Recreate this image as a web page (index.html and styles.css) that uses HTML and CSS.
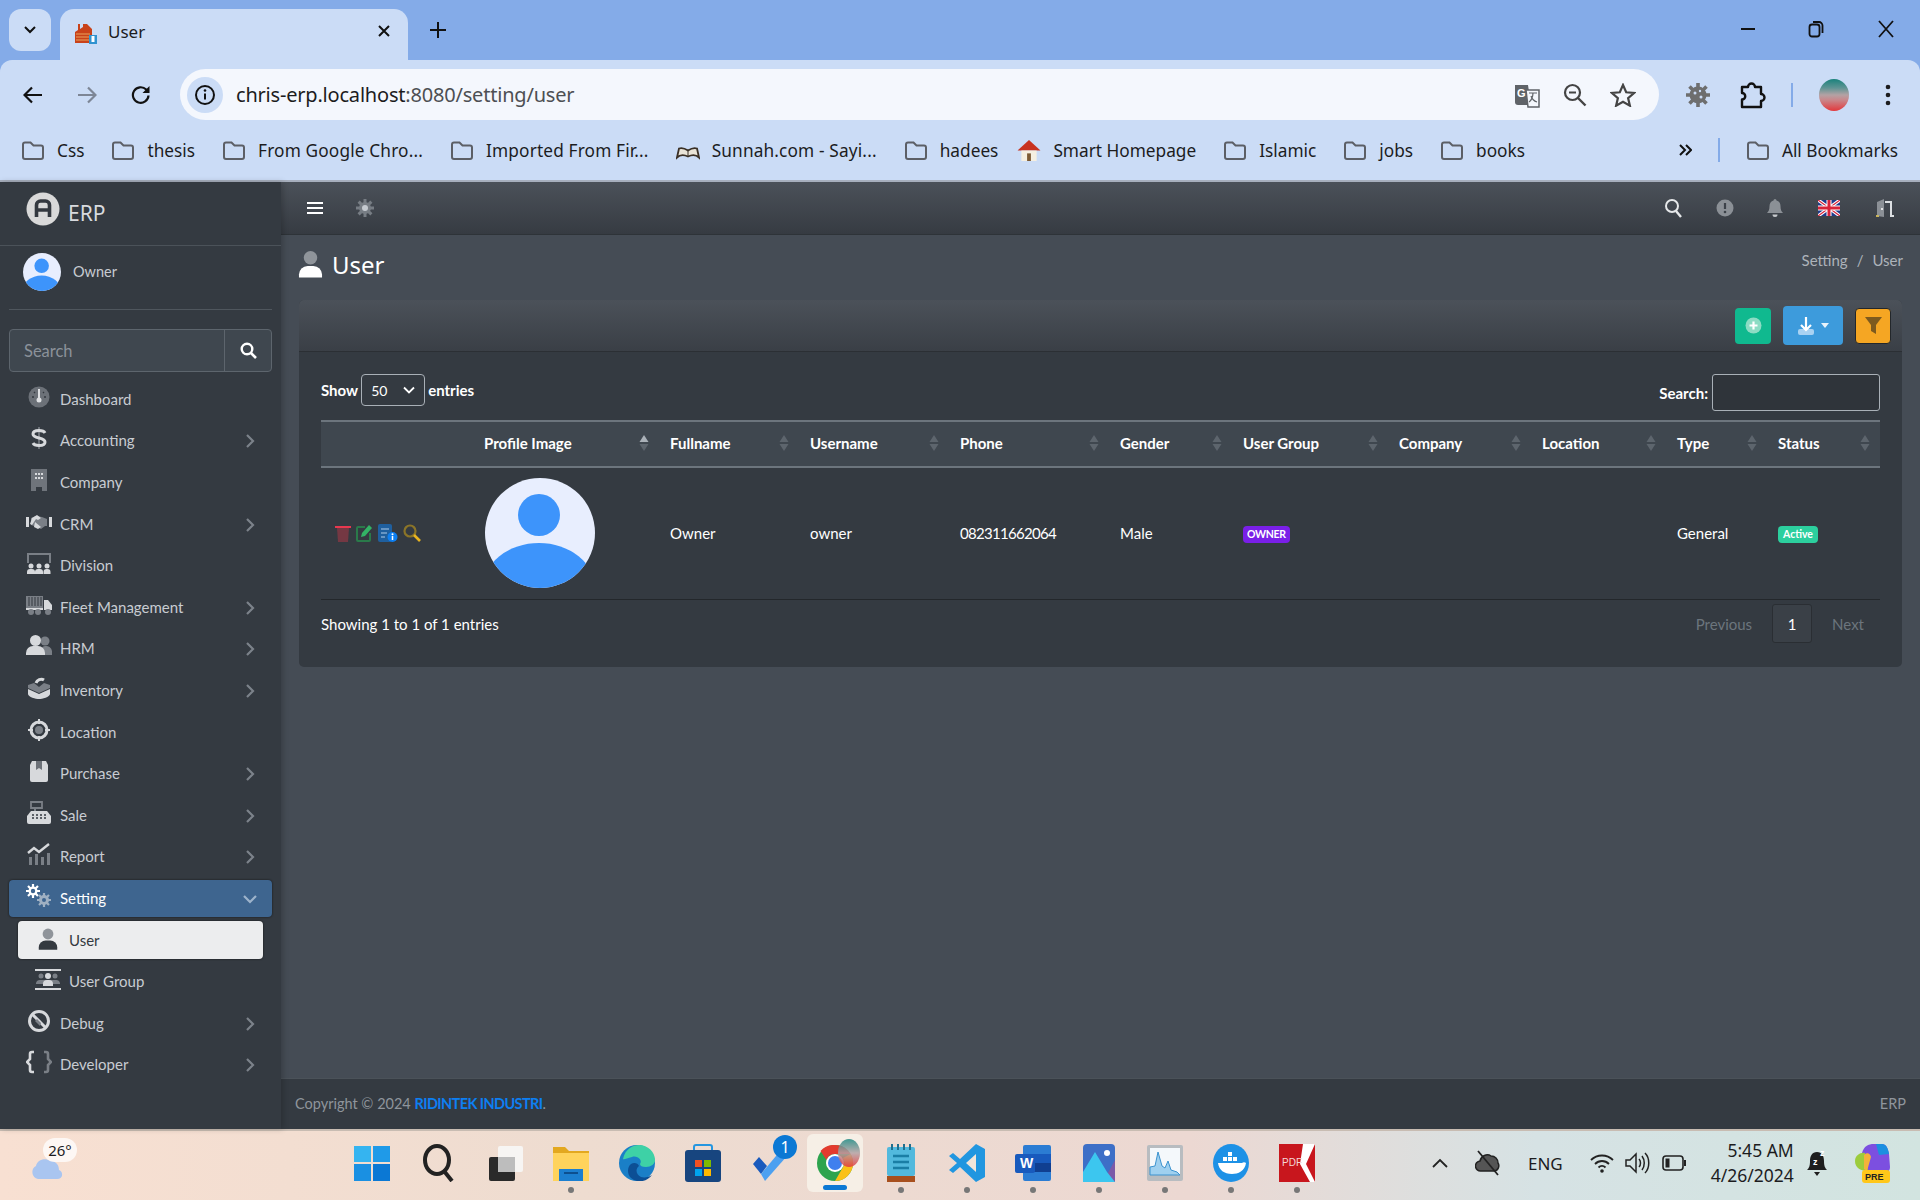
FILE: index.html
```html
<!DOCTYPE html>
<html lang="en">
<head>
    <meta charset="UTF-8">
    <meta name="viewport" content="width=device-width, initial-scale=1.0">
    <title>User</title>
    <link rel="stylesheet" href="styles.css">
</head>
<body>

    <!-- Shared icons -->
    <svg class="sprite" aria-hidden="true">
        <symbol id="folder" viewBox="0 0 24 20"><path d="M2 4a2 2 0 0 1 2-2h5.500l3 3H20a2 2 0 0 1 2 2v9.500a2 2 0 0 1-2 2H4a2 2 0 0 1-2-2z" fill="none" stroke="#5c5f66" stroke-width="2"/></symbol>
        <symbol id="chev" viewBox="0 0 10 16"><path d="M2 2l6 6-6 6" fill="none" stroke="#7c828a" stroke-width="2.200"/></symbol>
        <symbol id="sort" viewBox="0 0 10 18"><path d="M5 1l4.500 7H.5z" fill="#5d656d"/><path d="M5 17l4.500-7H.5z" fill="#5d656d"/></symbol>
        <symbol id="sortup" viewBox="0 0 10 18"><path d="M5 1l4.500 7H.5z" fill="#aab1b8"/><path d="M5 17l4.500-7H.5z" fill="#5d656d"/></symbol>
        <symbol id="avatar" viewBox="0 0 110 110"><clipPath id="avclip"><circle cx="55" cy="55" r="55"/></clipPath><circle cx="55" cy="55" r="55" fill="#e8eefe"/><circle cx="54" cy="37" r="21" fill="#3d94fb"/><ellipse cx="54" cy="110" rx="56" ry="45" fill="#3d94fb" clip-path="url(#avclip)"/></symbol>
        <symbol id="person" viewBox="0 0 26 28"><circle cx="13" cy="7.500" r="7" fill="#8f949a"/><path d="M1 28v-3a9 9 0 0 1 9-9h6a9 9 0 0 1 9 9v3z" fill="currentColor"/></symbol>
    </svg>

    <!-- Browser chrome -->
    <header class="browser">
        <div class="tabstrip">
            <div class="tab-list-btn"><svg width="14" height="10" viewBox="0 0 14 10"><path d="M2 2l5 5 5-5" fill="none" stroke="#111" stroke-width="2"/></svg></div>
            <div class="tab">
                <svg class="favicon" width="23" height="22" viewBox="0 0 23 22"><path d="M1 21V10l3-2V2h2v5l3-2V2l4 0 5 5v14z" fill="#c9421a"/><path d="M2 12h14M2 15h14M2 18h14" stroke="#e8a35c" stroke-width="1"/><rect x="15" y="13" width="8" height="9" fill="#3193d0"/><rect x="17.500" y="14" width="3" height="6" fill="#fff"/></svg>
                <span class="tab-title">User</span>
                <svg class="tab-close" width="14" height="14" viewBox="0 0 14 14"><path d="M2 2l10 10M12 2L2 12" stroke="#111" stroke-width="2"/></svg>
            </div>
            <svg class="new-tab" width="16" height="16" viewBox="0 0 16 16"><path d="M8 0v16M0 8h16" stroke="#111" stroke-width="2"/></svg>
            <div class="win-btns">
                <svg width="16" height="16" viewBox="0 0 16 16"><path d="M1 8h14" stroke="#111" stroke-width="2"/></svg>
                <svg width="16" height="18" viewBox="0 0 16 18"><rect x="1.500" y="4.500" width="10" height="12" rx="2.500" fill="none" stroke="#111" stroke-width="1.800"/><path d="M5 2h6a3.500 3.500 0 0 1 3.500 3.500V13" fill="none" stroke="#111" stroke-width="1.800"/></svg>
                <svg class="win-close" width="16" height="18" viewBox="0 0 16 18"><path d="M1 1l14 16M15 1L1 17" stroke="#111" stroke-width="1.800"/></svg>
            </div>
        </div>
        <div class="toolbar">
            <div class="nav-btns">
                <svg width="20" height="18" viewBox="0 0 20 18"><path d="M19 9H2M9 1.500L1.500 9 9 16.500" fill="none" stroke="#111" stroke-width="2.200"/></svg>
                <svg width="20" height="18" viewBox="0 0 20 18"><path d="M1 9h17M11 1.500L18.500 9 11 16.500" fill="none" stroke="#7d8696" stroke-width="2.200"/></svg>
                <svg width="20" height="20" viewBox="0 0 20 20"><path d="M17.500 10.500a7.800 7.800 0 1 1-2.300-6l2.300 2.300" fill="none" stroke="#111" stroke-width="2.200"/><path d="M18.500 1v7h-7z" fill="#111"/></svg>
            </div>
            <div class="omnibox">
                <div class="site-info"><svg width="22" height="22" viewBox="0 0 22 22"><circle cx="11" cy="11" r="9" fill="none" stroke="#111" stroke-width="2"/><path d="M11 9.500v6" stroke="#111" stroke-width="2"/><circle cx="11" cy="6.500" r="1.300" fill="#111"/></svg></div>
                <div class="url"><span class="url-host">chris-erp.localhost</span>:8080/setting/user</div>
                <div class="omni-actions">
                    <svg width="26" height="26" viewBox="0 0 26 26"><path d="M1 3h13l3 20H4a3 3 0 0 1-3-3z" fill="#5f6368"/><path d="M12 8h13v17H14z" fill="#f4f7fd" stroke="#5f6368" stroke-width="1.500"/><text class="gt" x="3" y="15">G</text><path d="M15 11h8M19 11c0 4-2 8-4 9M17 14c1 3 3 5 6 6" fill="none" stroke="#5f6368" stroke-width="1.200"/></svg>
                    <svg width="24" height="24" viewBox="0 0 24 24"><circle cx="9.500" cy="9.500" r="7.500" fill="none" stroke="#444" stroke-width="2.200"/><path d="M15 15l7.500 7.500" stroke="#444" stroke-width="2.400"/><path d="M6 9.500h7" stroke="#444" stroke-width="2"/></svg>
                    <svg width="26" height="24" viewBox="0 0 26 24"><path d="M13 2l3.200 7.300 7.800.7-5.900 5.100 1.800 7.600L13 18.700 6.100 22.700l1.800-7.600L2 10l7.800-.7z" fill="none" stroke="#444" stroke-width="2.200"/></svg>
                </div>
            </div>
            <div class="ext-btns">
                <svg class="ext-gear" width="26" height="26" viewBox="0 0 26 26"><circle cx="13" cy="13" r="8.500" fill="#6e6e6e"/><g stroke="#6e6e6e" stroke-width="3.600"><path d="M13 1v24M1 13h24M4.500 4.500l17 17M21.500 4.500l-17 17"/></g><circle cx="10" cy="11" r="1.500" fill="#cbdcf6"/><circle cx="16" cy="15" r="1.500" fill="#cbdcf6"/><circle cx="15" cy="9" r="1.200" fill="#cbdcf6"/></svg>
                <svg class="ext-puzzle" width="28" height="28" viewBox="0 0 28 28"><path d="M4 6h6a3.500 3.500 0 0 1 7 0h6v7a3.500 3.500 0 0 1 0 7v6H4v-7.500a3.200 3.200 0 0 0 0-6.500z" fill="none" stroke="#111" stroke-width="2.400" stroke-linejoin="round"/></svg>
                <span class="sep"></span>
                <span class="profile-pic"></span>
                <svg class="dots" width="6" height="22" viewBox="0 0 6 22"><circle cx="3" cy="3" r="2.300"/><circle cx="3" cy="11" r="2.300"/><circle cx="3" cy="19" r="2.300"/></svg>
            </div>
        </div>
        <div class="bookmarks">
            <a class="bm"><svg class="bm-ic"><use href="#folder"/></svg>Css</a>
            <a class="bm"><svg class="bm-ic"><use href="#folder"/></svg>thesis</a>
            <a class="bm bm-long"><svg class="bm-ic"><use href="#folder"/></svg>From Google Chro...</a>
            <a class="bm bm-long"><svg class="bm-ic"><use href="#folder"/></svg>Imported From Fir...</a>
            <a class="bm bm-long"><svg class="bm-ic" viewBox="0 0 24 20"><path d="M1 17c3-3 7-3 11-1 4-2 8-2 11 1l-2-9c-3-1-6 0-9 2-3-2-6-3-9-2z" fill="#e9e4d8" stroke="#3a3026" stroke-width="1.800"/><path d="M12 9v7" stroke="#3a3026"/></svg>Sunnah.com - Sayi...</a>
            <a class="bm"><svg class="bm-ic"><use href="#folder"/></svg>hadees</a>
            <a class="bm bm-home"><svg class="bm-ic" viewBox="0 0 24 22"><path d="M0 11L12 0l12 11z" fill="#c8321f"/><path d="M4 11h16v11H4z" fill="#f5efe1"/><path d="M10 14h4v8h-4z" fill="#7c5a34"/></svg>Smart Homepage</a>
            <a class="bm"><svg class="bm-ic"><use href="#folder"/></svg>Islamic</a>
            <a class="bm"><svg class="bm-ic"><use href="#folder"/></svg>jobs</a>
            <a class="bm"><svg class="bm-ic"><use href="#folder"/></svg>books</a>
            <div class="bm-right">
                <svg width="14" height="14" viewBox="0 0 14 14"><path d="M2 2l5 5-5 5M8 2l5 5-5 5" fill="none" stroke="#111" stroke-width="2"/></svg>
                <span class="sep"></span>
                <a class="bm"><svg class="bm-ic"><use href="#folder"/></svg>All Bookmarks</a>
            </div>
        </div>
    </header>

    <div class="app">
        <!-- Sidebar -->
        <aside class="sidebar">
            <div class="brand">
                <svg class="brand-logo" width="34" height="34" viewBox="0 0 34 34"><circle cx="17" cy="17" r="16.500" fill="#d9d9d9"/><path d="M10.500 25V13a4 4 0 0 1 4-4h5a4 4 0 0 1 4 4v12M10.500 18h13" fill="none" stroke="#33383f" stroke-width="3.600"/></svg>
                <span class="brand-name">ERP</span>
            </div>
            <div class="user-panel">
                <svg class="user-pic"><use href="#avatar"/></svg>
                <span>Owner</span>
            </div>
            <div class="side-search">
                <span class="side-search-input">Search</span>
                <span class="side-search-btn"><svg width="17" height="17" viewBox="0 0 17 17"><circle cx="7" cy="7" r="5.300" fill="none" stroke="#fff" stroke-width="2.400"/><path d="M11 11l5 5" stroke="#fff" stroke-width="2.600"/></svg></span>
            </div>
            <nav class="menu">
                <a class="item"><svg class="mi" viewBox="0 0 26 24"><circle cx="13" cy="12" r="10.500" fill="#6c7178"/><path d="M13 4v10" stroke="#dfe1e4" stroke-width="2"/><circle cx="13" cy="15" r="2.500" fill="#dfe1e4"/><path d="M6 12h2M18 12h2M8 7l1 1M18 7l-1 1" stroke="#33383f" stroke-width="1.400"/></svg>Dashboard</a>
                <a class="item"><svg class="mi" viewBox="0 0 26 24"><path d="M13 1v22" stroke="#6c7178" stroke-width="2"/><path d="M19 7c-1-2-3-2.500-6-2.500S7 5.500 7 8c0 5 12 3 12 8 0 2.500-3 3.500-6 3.500s-5-.5-6-2.500" fill="none" stroke="#d7d9dc" stroke-width="3"/></svg>Accounting<svg class="arrow"><use href="#chev"/></svg></a>
                <a class="item"><svg class="mi" viewBox="0 0 26 24"><path d="M5 1h16v22h-5v-4h-6v4H5z" fill="#6f747b"/><path d="M9 5h2v2H9zM12 5h2v2h-2zM15 5h2v2h-2zM9 9h2v2H9zM12 9h2v2h-2zM15 9h2v2h-2z" fill="#d7d9dc"/></svg>Company</a>
                <a class="item"><svg class="mi" viewBox="0 0 26 24"><path d="M0 7h3v10H0zM23 7h3v10h-3z" fill="#d7d9dc"/><path d="M5 8l5-2 6 1 5 2v7h-2l-4 3-4-2-6-2z" fill="#7a7f86"/><path d="M6 8l5-3 4 3-3 2-2-1-4 6-2-1z" fill="#d7d9dc"/><path d="M9 12l6 5-3 2-4-2z" fill="#d7d9dc"/></svg>CRM<svg class="arrow"><use href="#chev"/></svg></a>
                <a class="item"><svg class="mi" viewBox="0 0 26 24"><path d="M2 12V3h22v9" fill="none" stroke="#7a7f86" stroke-width="2"/><g fill="#d7d9dc"><circle cx="5" cy="15" r="2.500"/><circle cx="13" cy="15" r="2.500"/><circle cx="21" cy="15" r="2.500"/><path d="M1 23v-2a3 3 0 0 1 3-3h2a3 3 0 0 1 3 3v2zM9 23v-2a3 3 0 0 1 3-3h2a3 3 0 0 1 3 3v2zM17.500 23v-2a3 3 0 0 1 3-3h1a3 3 0 0 1 3 3v2z"/></g></svg>Division</a>
                <a class="item"><svg class="mi" viewBox="0 0 26 24"><path d="M0 3h17v12H0z" fill="#7a7f86"/><path d="M3 4v9M6 4v9M9 4v9M12 4v9M15 4v9" stroke="#33383f"/><path d="M18 7h4l4 5v5H18z" fill="#d7d9dc"/><path d="M0 15h17v2H0z" fill="#d7d9dc"/><circle cx="5" cy="19" r="3" fill="#7a7f86"/><circle cx="12" cy="19" r="3" fill="#7a7f86"/><circle cx="22" cy="19" r="3" fill="#7a7f86"/></svg>Fleet Management<svg class="arrow"><use href="#chev"/></svg></a>
                <a class="item"><svg class="mi" viewBox="0 0 26 24"><circle cx="19" cy="7" r="4.500" fill="#7a7f86"/><path d="M15 21v-4a5 5 0 0 1 4-5 6 6 0 0 1 7 5v4z" fill="#7a7f86"/><circle cx="9.500" cy="6.500" r="5.500" fill="#d7d9dc"/><path d="M0 21v-2a7 7 0 0 1 7-7h5a7 7 0 0 1 7 7v2z" fill="#d7d9dc"/></svg>HRM<svg class="arrow"><use href="#chev"/></svg></a>
                <a class="item"><svg class="mi" viewBox="0 0 26 24"><path d="M10 7c1-3 5-5 8-3" fill="none" stroke="#d7d9dc" stroke-width="3"/><path d="M2 9l6-2 5 4 5-4 6 2v3l-11 5L2 12z" fill="#7a7f86"/><path d="M2 13l11 5 11-5v5c0 3-8 5-11 5S2 21 2 18z" fill="#d7d9dc"/></svg>Inventory<svg class="arrow"><use href="#chev"/></svg></a>
                <a class="item"><svg class="mi" viewBox="0 0 26 24"><circle cx="13" cy="12" r="8" fill="none" stroke="#d7d9dc" stroke-width="3"/><circle cx="13" cy="12" r="4" fill="#7a7f86"/><path d="M13 1v5M13 18v5M2 12h5M19 12h5" stroke="#d7d9dc" stroke-width="2"/></svg>Location</a>
                <a class="item"><svg class="mi" viewBox="0 0 26 24"><path d="M4 6l2-4h14l2 4v15a2 2 0 0 1-2 2H6a2 2 0 0 1-2-2z" fill="#d7d9dc"/><path d="M10 2h6v9l-3-2-3 2z" fill="#6c7178"/></svg>Purchase<svg class="arrow"><use href="#chev"/></svg></a>
                <a class="item"><svg class="mi" viewBox="0 0 26 24"><path d="M5 1h11v6H5z" fill="none" stroke="#7a7f86" stroke-width="1.800"/><path d="M9 7v3" stroke="#7a7f86" stroke-width="2"/><path d="M5 10h16l4 5v6a2 2 0 0 1-2 2H3a2 2 0 0 1-2-2v-6z" fill="#d7d9dc"/><path d="M6 14h2M10 14h2M14 14h2M18 14h2M6 17h2M10 17h2M14 17h2M18 17h2" stroke="#33383f" stroke-width="1.400"/></svg>Sale<svg class="arrow"><use href="#chev"/></svg></a>
                <a class="item"><svg class="mi" viewBox="0 0 26 24"><path d="M2 11l6-5 5 4 10-8" fill="none" stroke="#d7d9dc" stroke-width="2.400"/><path d="M3 15h3v8H3zM9 12h3v11H9zM15 15h3v8h-3zM21 11h3v12h-3z" fill="#7a7f86"/></svg>Report<svg class="arrow"><use href="#chev"/></svg></a>
                <a class="item item-open"><svg class="mi" viewBox="0 0 26 24"><g fill="#fff" stroke="#fff"><circle cx="7" cy="7" r="3.500" stroke-width="2"/><path d="M7 0v14M0 7h14M2 2l10 10M12 2L2 12" stroke-width="2.200"/></g><circle cx="7" cy="7" r="2.200" fill="#3e658f"/><g stroke="#9fb0c2" fill="#9fb0c2"><circle cx="18" cy="16" r="4" stroke-width="2"/><path d="M18 9v14M11 16h14M13 11l10 10M23 11L13 21" stroke-width="2.200"/></g><circle cx="18" cy="16" r="2" fill="#3e658f"/></svg>Setting<svg class="arrow arrow-down" viewBox="0 0 16 10"><path d="M2 2l6 6 6-6" fill="none" stroke="#9db3cb" stroke-width="2.200"/></svg></a>
                <a class="item sub sub-active"><svg class="mi mi-user"><use href="#person"/></svg>User</a>
                <a class="item sub"><svg class="mi" viewBox="0 0 26 24"><path d="M0 2h26v2H0zM0 21h26v2H0z" fill="#d7d9dc"/><g fill="#7a7f86"><circle cx="6" cy="9" r="2.500"/><circle cx="20" cy="9" r="2.500"/><path d="M1 17v-1a4 4 0 0 1 4-3h16a4 4 0 0 1 4 3v1z"/></g><circle cx="13" cy="9" r="3" fill="#d7d9dc"/><path d="M8 19v-2a4 4 0 0 1 4-4h2a4 4 0 0 1 4 4v2z" fill="#d7d9dc"/></svg>User Group</a>
                <a class="item"><svg class="mi" viewBox="0 0 26 24"><circle cx="13" cy="12" r="9.500" fill="none" stroke="#d7d9dc" stroke-width="3"/><path d="M6 5l14 14" stroke="#d7d9dc" stroke-width="3"/><path d="M9 12l5 5 1-3-4-4z" fill="#7a7f86"/></svg>Debug<svg class="arrow"><use href="#chev"/></svg></a>
                <a class="item"><svg class="mi" viewBox="0 0 26 24"><path d="M8 2H6a2 2 0 0 0-2 2v5l-3 3 3 3v5a2 2 0 0 0 2 2h2" fill="none" stroke="#d7d9dc" stroke-width="2.600"/><path d="M18 2h2a2 2 0 0 1 2 2v5l3 3-3 3v5a2 2 0 0 1-2 2h-2" fill="none" stroke="#7a7f86" stroke-width="2.600"/></svg>Developer<svg class="arrow"><use href="#chev"/></svg></a>
            </nav>
        </aside>

        <div class="main">
            <div class="topbar">
                <svg class="hamburger" width="16" height="14" viewBox="0 0 16 14"><path d="M0 2h16M0 7h16M0 12h16" stroke="#fff" stroke-width="2.200"/></svg>
                <svg class="top-gear" width="18" height="18" viewBox="0 0 18 18"><g stroke="#777d84" stroke-width="3"><path d="M9 0v18M0 9h18M2.600 2.600l12.800 12.800M15.400 2.600L2.600 15.400"/></g><circle cx="9" cy="9" r="6" fill="#777d84"/><circle cx="9" cy="9" r="3" fill="#c5cad0"/></svg>
                <div class="top-right">
                    <svg class="top-search" width="18" height="20" viewBox="0 0 18 20"><circle cx="8" cy="8" r="6" fill="none" stroke="#e6e8ea" stroke-width="2"/><path d="M12 13l5 6" stroke="#e6e8ea" stroke-width="2.400"/></svg>
                    <svg width="18" height="18" viewBox="0 0 18 18"><circle cx="9" cy="9" r="8.500" fill="#8b9096"/><path d="M9 4v6" stroke="#3c4249" stroke-width="2.200"/><circle cx="9" cy="13" r="1.300" fill="#3c4249"/></svg>
                    <svg width="16" height="18" viewBox="0 0 16 18"><path d="M8 0a1.500 1.500 0 0 1 1.500 1.500C12 2 13.500 4.500 13.500 7c0 4 1 5.500 2.500 7H0c1.500-1.500 2.500-3 2.500-7C2.500 4.500 4 2 6.500 1.500A1.500 1.500 0 0 1 8 0z" fill="#8b9096"/><path d="M5.500 15.500h5a2.500 2.500 0 0 1-5 0z" fill="#c5c8cc"/></svg>
                    <svg class="flag" width="22" height="16" viewBox="0 0 22 16"><rect width="22" height="16" fill="#1f3a8a"/><path d="M0 0l22 16M22 0L0 16" stroke="#fff" stroke-width="3.400"/><path d="M0 0l22 16M22 0L0 16" stroke="#d8233a" stroke-width="1.200"/><path d="M11 0v16M0 8h22" stroke="#fff" stroke-width="5"/><path d="M11 0v16M0 8h22" stroke="#d8233a" stroke-width="3"/></svg>
                    <svg class="door" width="18" height="18" viewBox="0 0 18 18"><path d="M1 17V3l7-3v18z" fill="#8b9096"/><path d="M9 3h6v14h3" fill="none" stroke="#dcdfe2" stroke-width="2"/><circle cx="6" cy="10" r="1" fill="#fff"/><path d="M0 16h3v2H0z" fill="#c9b45c"/></svg>
                </div>
            </div>

            <div class="content">
                <div class="page-head">
                    <h1><svg class="title-ic"><use href="#person"/></svg>User</h1>
                    <div class="crumb">Setting<span class="crumb-sep">/</span>User</div>
                </div>

                <section class="card">
                    <div class="card-head">
                        <span class="btn btn-add"><svg width="17" height="17" viewBox="0 0 17 17"><circle cx="8.500" cy="8.500" r="8" fill="#8cdcc4"/><path d="M8.500 4.500v8M4.500 8.500h8" stroke="#fff" stroke-width="2.200"/></svg></span>
                        <span class="btn btn-export"><svg width="18" height="20" viewBox="0 0 18 20"><rect x="1" y="13" width="16" height="6" rx="2" fill="#a9d2f2"/><path d="M9 1v13M4 9l5 5 5-5" fill="none" stroke="#fff" stroke-width="2.200"/></svg><svg width="8" height="5" viewBox="0 0 8 5"><path d="M0 0h8L4 5z" fill="#e8f3fb"/></svg></span>
                        <span class="btn btn-filter"><svg width="17" height="17" viewBox="0 0 17 17"><path d="M0 0h17l-6 8v9l-5-3V8z" fill="#7d5a1e"/></svg></span>
                    </div>
                    <div class="card-body">
                        <div class="controls">
                            <label class="show-len">Show <span class="len-select">50<svg width="12" height="8" viewBox="0 0 12 8"><path d="M1 1.500l5 5 5-5" fill="none" stroke="#fff" stroke-width="1.800"/></svg></span> entries</label>
                            <label class="dt-search">Search: <span class="dt-input"></span></label>
                        </div>

                        <table class="users">
                            <colgroup><col class="c1"><col class="c2"><col class="c3"><col class="c4"><col class="c5"><col class="c6"><col class="c7"><col class="c8"><col class="c9"><col class="c10"><col class="c11"></colgroup>
                            <thead>
                                <tr>
                                    <th></th>
                                    <th><div class="th-in">Profile Image<svg class="sort"><use href="#sortup"/></svg></div></th>
                                    <th><div class="th-in">Fullname<svg class="sort"><use href="#sort"/></svg></div></th>
                                    <th><div class="th-in">Username<svg class="sort"><use href="#sort"/></svg></div></th>
                                    <th><div class="th-in">Phone<svg class="sort"><use href="#sort"/></svg></div></th>
                                    <th><div class="th-in">Gender<svg class="sort"><use href="#sort"/></svg></div></th>
                                    <th><div class="th-in">User Group<svg class="sort"><use href="#sort"/></svg></div></th>
                                    <th><div class="th-in">Company<svg class="sort"><use href="#sort"/></svg></div></th>
                                    <th><div class="th-in">Location<svg class="sort"><use href="#sort"/></svg></div></th>
                                    <th><div class="th-in">Type<svg class="sort"><use href="#sort"/></svg></div></th>
                                    <th><div class="th-in">Status<svg class="sort"><use href="#sort"/></svg></div></th>
                                </tr>
                            </thead>
                            <tbody>
                                <tr>
                                    <td>
                                        <div class="row-actions">
                                            <svg width="16" height="18" viewBox="0 0 16 18"><path d="M2 4h12l-1 14H3z" fill="#743843"/><path d="M0 2h16v2H0z" fill="#e8384f"/></svg>
                                            <svg width="17" height="18" viewBox="0 0 17 18"><path d="M9 3H2a1 1 0 0 0-1 1v12a1 1 0 0 0 1 1h11a1 1 0 0 0 1-1V9" fill="none" stroke="#2a7a4a" stroke-width="2"/><path d="M5 13l1-4 7-8 3 3-7 8z" fill="#33b365"/></svg>
                                            <svg width="20" height="18" viewBox="0 0 20 18"><rect width="14" height="18" rx="2" fill="#1f5f9e"/><path d="M3 5h8M3 9h6M3 13h4" stroke="#7fa8d0" stroke-width="1.400"/><circle cx="14.500" cy="13" r="5" fill="#0d7ff2"/><path d="M14.500 12v4" stroke="#fff" stroke-width="1.500"/><circle cx="14.500" cy="10.300" r="1" fill="#fff"/></svg>
                                            <svg width="18" height="18" viewBox="0 0 18 18"><circle cx="7" cy="7" r="5.500" fill="none" stroke="#8a7428" stroke-width="2.200"/><path d="M11 11l6 6" stroke="#e8b420" stroke-width="2.600"/></svg>
                                        </div>
                                    </td>
                                    <td><svg class="row-avatar"><use href="#avatar"/></svg></td>
                                    <td>Owner</td>
                                    <td>owner</td>
                                    <td class="phone">082311662064</td>
                                    <td>Male</td>
                                    <td><span class="badge badge-group">OWNER</span></td>
                                    <td></td>
                                    <td></td>
                                    <td>General</td>
                                    <td><span class="badge badge-active">Active</span></td>
                                </tr>
                            </tbody>
                        </table>

                        <div class="table-foot">
                            <span class="dt-info">Showing 1 to 1 of 1 entries</span>
                            <div class="pager">
                                <span class="page-link">Previous</span>
                                <span class="page-num">1</span>
                                <span class="page-link">Next</span>
                            </div>
                        </div>
                    </div>
                </section>
            </div>

            <footer class="footer">
                <span>Copyright &copy; 2024 <b class="footer-link">RIDINTEK INDUSTRI</b>.</span>
                <span class="footer-erp">ERP</span>
            </footer>
        </div>
    </div>

    <!-- Windows taskbar -->
    <div class="taskbar">
        <div class="weather">
            <svg width="40" height="34" viewBox="0 0 40 34"><path d="M8 33a7 7 0 0 1-2-13c1-6 9-9 14-5 5 0 9 3 9 9 4 1 5 9-2 9z" fill="#a9c5f0"/></svg>
            <span class="temp">26&deg;</span>
        </div>
        <div class="apps">
            <div class="app-slot"><svg width="36" height="36" viewBox="0 0 36 36"><path d="M0 1h17v16H0z" fill="#35b4f0"/><path d="M19 1h17v16H19z" fill="#1f9ae8"/><path d="M0 19h17v17H0z" fill="#1a90e2"/><path d="M19 19h17v17H19z" fill="#0b78d4"/></svg></div>
            <div class="app-slot"><svg width="36" height="38" viewBox="0 0 36 38"><ellipse cx="16" cy="16" rx="12" ry="14" fill="none" stroke="#222" stroke-width="4"/><path d="M23 27l8 10" stroke="#222" stroke-width="4"/></svg></div>
            <div class="app-slot"><svg width="36" height="36" viewBox="0 0 36 36"><rect x="2" y="12" width="26" height="24" rx="2" fill="#2a2a2a"/><rect x="11" y="1" width="25" height="26" rx="2" fill="#f7f5f3"/><rect x="11" y="12" width="17" height="15" fill="#bdbdbd"/></svg></div>
            <div class="app-slot app-run"><svg width="36" height="36" viewBox="0 0 36 36"><path d="M0 2h12l4 4h20v30H0z" fill="#e3a820"/><path d="M0 8h36v28H0z" fill="#ffd35c"/><path d="M6 24h24v12H6z" fill="#1c7fd0"/><path d="M11 28h14" stroke="#0d4f8f" stroke-width="2"/></svg></div>
            <div class="app-slot"><svg width="36" height="36" viewBox="0 0 36 36"><circle cx="18" cy="18" r="18" fill="#1a7fc7"/><path d="M4 14C6 4 14 0 20 0c9 0 16 7 16 15 0 4-4 7-9 7-4 0-6-1-6-3 3-4-3-9-8-7-5 1-8 3-9 2z" fill="#3ed1a6"/><path d="M20 21c-4 3-3 9 2 11 4 1 8 0 11-2-4 6-14 9-21 3C8 29 8 22 12 19c3-2 7-1 8 2z" fill="#0c4f95"/></svg></div>
            <div class="app-slot"><svg width="36" height="38" viewBox="0 0 36 38"><path d="M9 6V3a2 2 0 0 1 2-2h14a2 2 0 0 1 2 2v3" fill="none" stroke="#2596e0" stroke-width="2"/><rect y="6" width="36" height="32" rx="3" fill="#17457f"/><path d="M10 16h7v7h-7z" fill="#f25022"/><path d="M19 16h7v7h-7z" fill="#7fba00"/><path d="M10 25h7v7h-7z" fill="#00a4ef"/><path d="M19 25h7v7h-7z" fill="#ffb900"/></svg></div>
            <div class="app-slot app-todo"><svg width="36" height="36" viewBox="0 0 36 36"><path d="M2 19l6-7 8 9-6 8z" fill="#195abd"/><path d="M10 29l20-24 6 6-22 25z" fill="#4ca0f0"/></svg><span class="todo-count">1</span></div>
            <div class="app-slot app-active"><svg width="36" height="36" viewBox="0 0 36 36"><circle cx="18" cy="18" r="18" fill="#2da44e"/><path d="M18 0a18 18 0 0 1 15.600 9H18a9 9 0 0 0-8.500 6L3.500 6A18 18 0 0 1 18 0z" fill="#e33b2e"/><path d="M33.600 9A18 18 0 0 1 18 36l7.800-13.500A9 9 0 0 0 26 13z" fill="#fbc116"/><circle cx="18" cy="18" r="9" fill="#fff"/><circle cx="18" cy="18" r="7" fill="#3f7fee"/></svg><span class="chrome-badge"></span></div>
            <div class="app-slot app-run"><svg width="28" height="38" viewBox="0 0 28 38"><rect y="3" width="28" height="29" rx="2" fill="#52b9dd"/><path d="M5 0v6M11 0v6M17 0v6M23 0v6" stroke="#1f6f8f" stroke-width="2"/><path d="M6 12h16M6 18h16M6 24h16" stroke="#1a7ea5" stroke-width="2.400"/><rect y="32" width="28" height="6" fill="#a8501e"/></svg></div>
            <div class="app-slot app-run"><svg width="36" height="38" viewBox="0 0 36 38"><path d="M27 0l9 5v28l-9 5-16-15-7 6-4-3 8-7-8-7 4-3 7 6z" fill="#2196e0"/><path d="M27 10v18l-10-9z" fill="#f2e5da"/></svg></div>
            <div class="app-slot app-run"><svg width="36" height="36" viewBox="0 0 36 36"><rect x="8" y="0" width="28" height="36" rx="2" fill="#2b7cd3"/><path d="M8 9h28v9H8z" fill="#185abd"/><path d="M8 18h28v9H8z" fill="#103f91"/><rect y="9" width="20" height="19" rx="2" fill="#185abd"/><text class="word-w" x="5" y="23">W</text></svg></div>
            <div class="app-slot app-run"><svg width="32" height="38" viewBox="0 0 32 38"><rect width="32" height="38" rx="4" fill="#3d6fc7"/><path d="M32 0v38H20L32 16z" fill="#7b5aa8"/><path d="M0 38V28L12 8l12 20 8 10z" fill="#3cc6ef"/><circle cx="24" cy="9" r="3" fill="#fff"/></svg></div>
            <div class="app-slot app-run"><svg width="36" height="36" viewBox="0 0 36 36"><rect width="36" height="36" rx="2" fill="#b8bcc0"/><rect x="3" y="3" width="30" height="27" fill="#f4f8fb"/><path d="M3 30v-8l5-1 3-14 4 14 3 2 3-7 3 9 3 1 3 1 3 3z" fill="#9fd0ef" stroke="#3c93cf"/></svg></div>
            <div class="app-slot app-run"><svg width="36" height="38" viewBox="0 0 36 38"><ellipse cx="18" cy="19" rx="18" ry="19" fill="#1d91e6"/><path d="M5 19h24c1-1 3-1 4 0-1 8-8 11-14 11-8 0-13-4-14-11z" fill="#fff"/><path d="M10 13h4v4h-4zM15 13h4v4h-4zM20 13h4v4h-4zM15 8h4v4h-4z" fill="#fff"/></svg></div>
            <div class="app-slot app-run"><svg width="36" height="38" viewBox="0 0 36 38"><rect width="36" height="38" fill="#c8161d"/><path d="M24 0h5l7 0-9 20 9 18h-5L21 20z" fill="#fff"/><text class="pdf-t" x="3" y="22">PDF</text></svg></div>
        </div>
        <div class="tray">
            <svg width="16" height="10" viewBox="0 0 16 10"><path d="M1 9l7-7 7 7" fill="none" stroke="#222" stroke-width="1.800"/></svg>
            <svg class="tray-cloud" width="26" height="26" viewBox="0 0 26 26"><path d="M6 21a5 5 0 0 1-1-10c1-5 7-8 11-5 4 0 7 3 7 7 2 3 0 8-4 8z" fill="#555" stroke="#222" stroke-width="1.500"/><path d="M3 1l20 24" stroke="#222" stroke-width="1.800"/></svg>
            <span class="tray-lang">ENG</span>
            <svg class="tray-wifi" width="24" height="22" viewBox="0 0 24 22"><path d="M1 8c6-6 16-6 22 0M5 12c4-4 10-4 14 0M8.500 15.500c2-2 5-2 7 0" fill="none" stroke="#222" stroke-width="1.800"/><circle cx="12" cy="19" r="1.800" fill="#222"/></svg>
            <svg class="tray-sound" width="26" height="24" viewBox="0 0 26 24"><path d="M1 9h4l6-6v18l-6-6H1z" fill="none" stroke="#222" stroke-width="1.500"/><path d="M14 8c2 2 2 6 0 8M17 5c3 4 3 10 0 14M20 2c5 5 5 15 0 20" fill="none" stroke="#222" stroke-width="1.500"/></svg>
            <svg class="tray-batt" width="24" height="16" viewBox="0 0 24 16"><rect x="1" y="1" width="20" height="14" rx="3" fill="none" stroke="#222" stroke-width="1.600"/><rect x="3.500" y="3.500" width="4" height="9" fill="#222"/><path d="M22 5h2v6h-2z" fill="#222"/></svg>
            <div class="clock"><span>5:45 AM</span><span>4/26/2024</span></div>
            <svg class="tray-bell" width="22" height="30" viewBox="0 0 22 30"><path d="M11 4c5 0 7 4 7 9 0 5 1 7 3 9H1c2-2 3-4 3-9 0-5 2-9 7-9z" fill="#1e1e1e"/><path d="M8 24h6l-3 4z" fill="#1e1e1e"/><text class="zz" x="7" y="17">z</text><text class="zz" x="14" y="8">z</text></svg>
            <svg class="tray-copilot" width="36" height="40" viewBox="0 0 36 40"><path d="M8 10C10 3 14 1 20 1h8c4 0 6 4 7 10l1 13c0 4-3 6-7 6h-9C12 30 10 28 11 22z" fill="#7c4fe0"/><path d="M22 1h6c4 0 6 4 7 10l-10 1z" fill="#1b8fe0"/><path d="M1 18c0-6 6-9 10-8l3 18c-7 0-13-3-13-10z" fill="#9ccc3c"/><path d="M10 12c3-3 6-2 7 2l-4 14-3-2z" fill="#f4b23a"/><rect x="8" y="27" width="28" height="13" rx="3" fill="#ffc71a"/><text class="pre" x="11" y="37">PRE</text></svg>
        </div>
    </div>

</body>
</html>
```

FILE: styles.css
```css
* {
    box-sizing: border-box;
}
html, body {
    margin: 0;
    height: 100%;
}
body {
    width: 1920px;
    height: 1200px;
    overflow: hidden;
    display: flex;
    flex-direction: column;
    font-family: Lato, "Open Sans", sans-serif;
    background-color: #454c55;
}
svg {
    flex: none;
    display: block;
}
.sprite {
    width: 0;
    height: 0;
    position: absolute;
}

/* Browser chrome */
.browser {
    flex: none;
    height: 182px;
    background-color: #84abe8;
    font-family: "Noto Sans", sans-serif;
    color: #1c1c1e;
    border-bottom: 2px solid #a7afbd;
}
.tabstrip {
    height: 60px;
    display: flex;
    align-items: flex-end;
    padding-left: 9px;
}
.tab-list-btn {
    width: 42px;
    height: 42px;
    margin-bottom: 9px;
    border-radius: 12px;
    background-color: #cbdcf6;
    display: flex;
    align-items: center;
    justify-content: center;
}
.tab {
    width: 348px;
    height: 51px;
    margin-left: 9px;
    padding: 0 17px 8px 14px;
    border-radius: 14px 14px 0 0;
    background-color: #cbdcf6;
    display: flex;
    align-items: center;
}
.favicon {
    margin-top: 4px;
}
.tab-title {
    margin-left: 11px;
    font-size: 17px;
    flex: 1;
    margin-top: 1px;
}
.new-tab {
    margin: 0 0 22px 22px;
}
.win-btns {
    margin-left: auto;
    display: flex;
    gap: 52px;
    padding: 0 26px 22px 0;
    align-items: center;
}
.win-close {
    margin-left: 2px;
}
.toolbar {
    height: 60px;
    padding-top: 9px;
    background-color: #cbdcf6;
    border-radius: 12px 12px 0 0;
    display: flex;
    align-items: center;
}
.nav-btns {
    width: 180px;
    padding-left: 23px;
    display: flex;
    gap: 34px;
    align-items: center;
}
.omnibox {
    width: 1479px;
    height: 51px;
    border-radius: 26px;
    background-color: #f4f7fd;
    display: flex;
    align-items: center;
    padding-left: 7px;
}
.site-info {
    width: 36px;
    height: 36px;
    border-radius: 50%;
    background-color: #cbdcf6;
    display: flex;
    align-items: center;
    justify-content: center;
}
.url {
    margin-left: 13px;
    font-size: 20px;
    letter-spacing: -0.2px;
    color: #4d4f53;
}
.url-host {
    color: #1c1c1e;
}
.omni-actions {
    margin-left: auto;
    padding-right: 23px;
    display: flex;
    align-items: center;
    gap: 23px;
}
.gt {
    font: bold 11px "Liberation Sans", sans-serif;
    fill: #fff;
}
.ext-btns {
    flex: 1;
    display: flex;
    align-items: center;
    padding-left: 26px;
}
.ext-puzzle {
    margin-left: 27px;
}
.sep {
    display: block;
    width: 2px;
    height: 24px;
    background-color: #84abe8;
}
.ext-btns .sep {
    margin-left: 25px;
}
.profile-pic {
    width: 30px;
    height: 32px;
    margin-left: 26px;
    border-radius: 50%;
    background: linear-gradient(#1a827c 0%, #5f9494 28%, #b4a2a4 50%, #c8888c 65%, #e3383c 100%);
}
.dots {
    margin-left: 36px;
    fill: #1c1c1e;
}
.bookmarks {
    height: 60px;
    background-color: #cbdcf6;
    padding: 0 22px 0 21px;
    display: flex;
    align-items: center;
    gap: 27px;
    font-size: 17.250px;
}
.bm {
    display: flex;
    align-items: center;
    gap: 12px;
    white-space: nowrap;
}
.bm-long {
    letter-spacing: 0.15px;
}
.bm-home {
    margin-left: -8px;
}
.bm-ic {
    width: 24px;
    height: 21px;
}
.bm-right {
    margin-left: auto;
    display: flex;
    align-items: center;
    gap: 26px;
}

/* App layout */
.app {
    flex: 1;
    min-height: 0;
    display: flex;
}
.sidebar {
    width: 281px;
    flex: none;
    background-color: #343a41;
    color: #c8ccd2;
    font-size: 15px;
    box-shadow: 2px 0 6px rgba(0, 0, 0, 0.2);
    z-index: 1;
}
.brand {
    height: 64px;
    padding: 10px 0 0 26px;
    border-bottom: 1px solid #4b5259;
    display: flex;
    align-items: flex-start;
}
.brand-name {
    margin: 7px 0 0 8px;
    font-size: 21px;
    color: #d8dade;
    font-family: "Noto Sans", sans-serif;
}
.user-panel {
    height: 64px;
    margin: 0 9px;
    padding: 0 14px 12px;
    border-bottom: 1px solid #4f565d;
    display: flex;
    align-items: center;
    font-size: 14.500px;
    gap: 12px;
}
.user-pic {
    width: 38px;
    height: 38px;
}
.side-search {
    margin: 19px 9px 0;
    height: 43px;
    display: flex;
    background-color: #3f474f;
    border: 1px solid #5d656d;
    border-radius: 4px;
    font-size: 16.500px;
    color: #8b929a;
}
.side-search-input {
    flex: 1;
    padding-left: 14px;
    display: flex;
    align-items: center;
}
.side-search-btn {
    width: 47px;
    border-left: 1px solid #5d656d;
    display: flex;
    align-items: center;
    justify-content: center;
}
.menu {
    margin-top: 8.500px;
    padding: 0 9px;
    display: flex;
    flex-direction: column;
    gap: 4px;
}
.item {
    height: 37.600px;
    display: flex;
    align-items: center;
    padding: 0 0 1px 17px;
    border-radius: 4px;
}
.mi {
    width: 26px;
    height: 24px;
    margin: -4px 8px 0 0;
}
.arrow {
    width: 10px;
    height: 16px;
    margin-left: auto;
    margin-right: 17px;
    margin-top: 2px;
}
.item-open {
    background-color: #3e658f;
    color: #fff;
    box-shadow: 0 0 2px #111;
}
.arrow-down {
    width: 16px;
    height: 10px;
    margin-right: 14px;
}
.sub {
    margin: 0 9px;
    padding-left: 17px;
}
.sub-active {
    background-color: #ecedee;
    color: #343a40;
    box-shadow: 0 0 2px #111;
}
.mi-user {
    color: #343a40;
    width: 20px;
    height: 22px;
    margin: -2px 11px 0 3px;
}
.main {
    flex: 1;
    min-width: 0;
    display: flex;
    flex-direction: column;
}
.topbar {
    height: 53px;
    flex: none;
    display: flex;
    align-items: center;
    padding-left: 26px;
    background: linear-gradient(#4b5159, #363b42);
    border-bottom: 1px solid #2e3338;
}
.top-gear {
    margin-left: 33px;
}
.top-right {
    margin-left: auto;
    padding-right: 26px;
    display: flex;
    align-items: center;
    gap: 33px;
}
.top-search {
    margin-right: 1.500px;
}
.flag {
    margin-left: 2px;
}
.door {
    margin-left: 3px;
}
.content {
    flex: 1;
    padding: 0 18px;
    background-color: #454c55;
}
.page-head {
    height: 65px;
    display: flex;
    justify-content: space-between;
    color: #fff;
}
.page-head h1 {
    margin: 14px 0 0 -1px;
    display: flex;
    align-items: center;
    height: 30px;
    font-size: 24px;
    font-weight: 400;
    gap: 9px;
    font-family: "Noto Sans", sans-serif;
}
.title-ic {
    width: 25px;
    height: 28px;
    color: #fff;
}
.crumb {
    margin: 16px -1px 0 0;
    font-size: 15px;
    color: #adb3ba;
}
.crumb-sep {
    margin: 0 9px;
}
.card {
    height: 367px;
    border-radius: 5px;
    background-color: #343a41;
    color: #fff;
    font-size: 15px;
    overflow: hidden;
}
.card-head {
    height: 52px;
    display: flex;
    align-items: center;
    justify-content: flex-end;
    gap: 12px;
    padding-right: 11px;
    background: linear-gradient(#4b5159, #3a3f46);
    border-bottom: 1px solid #2b2f34;
}
.btn {
    height: 36px;
    display: flex;
    align-items: center;
    justify-content: center;
    border-radius: 4px;
}
.btn-add {
    width: 36px;
    background-color: #10b98f;
}
.btn-export {
    width: 60px;
    height: 39px;
    gap: 6px;
    background-color: #3d9bdc;
}
.btn-filter {
    width: 36px;
    background-color: #f5a623;
    border: 1px solid #23272b;
}
.card-body {
    padding: 22px 22px 0;
}
.controls {
    height: 46px;
    display: flex;
    justify-content: space-between;
    align-items: flex-start;
    font-weight: 700;
}
.show-len {
    height: 32px;
    display: flex;
    align-items: center;
    gap: 3px;
}
.len-select {
    width: 64px;
    height: 32px;
    padding: 0 9px;
    border: 1px solid #a9b0b7;
    border-radius: 4px;
    font-size: 14px;
    font-weight: 400;
    display: flex;
    align-items: center;
    justify-content: space-between;
}
.dt-search {
    display: flex;
    align-items: center;
    gap: 4px;
}
.dt-input {
    width: 168px;
    height: 37px;
    border: 1px solid #a9b0b7;
    border-radius: 3px;
    background-color: #2f343a;
}
.users {
    width: 1559px;
    table-layout: fixed;
    border-collapse: collapse;
}
.c1 { width: 147px; }
.c2 { width: 186px; }
.c3 { width: 140px; }
.c4 { width: 150px; }
.c5 { width: 160px; }
.c6 { width: 123px; }
.c7 { width: 156px; }
.c8 { width: 143px; }
.c9 { width: 135px; }
.c10 { width: 101px; }
.c11 { width: 118px; }
.users th {
    height: 46px;
    padding: 0 5px 2px 16px;
    background-color: #3f474f;
    border-top: 2px solid #6c757d;
    border-bottom: 2px solid #6c757d;
    font-weight: 700;
    text-align: left;
}
.users th:last-child {
    padding-right: 10px;
}
.th-in {
    display: flex;
    align-items: center;
    justify-content: space-between;
}
.sort {
    width: 10px;
    height: 18px;
}
.users td {
    height: 132px;
    padding: 0 0 0 16px;
    border-bottom: 1px solid #23272b;
    vertical-align: middle;
}
.row-actions {
    display: flex;
    align-items: center;
    gap: 5px;
    margin-left: -2px;
}
.row-avatar {
    width: 110px;
    height: 110px;
    margin-left: 1px;
}
.phone {
    letter-spacing: -0.7px;
}
.badge {
    display: inline-block;
    padding: 0 5px;
    height: 17px;
    line-height: 17px;
    border-radius: 4px;
    font-size: 10.500px;
    font-weight: 700;
    vertical-align: middle;
}
.badge-group {
    padding: 0 4px;
    letter-spacing: -0.3px;
    background-color: #7a1fe8;
}
.badge-active {
    background-color: #2ccf9e;
}
.table-foot {
    height: 48px;
    display: flex;
    align-items: center;
    justify-content: space-between;
}
.dt-info {
    font-size: 15px;
}
.pager {
    display: flex;
    align-items: center;
    padding-right: 16px;
    color: #6c757d;
}
.page-num {
    width: 40px;
    height: 39px;
    margin: 0 20px;
    border: 1px solid #2a2e33;
    border-radius: 3px;
    background-color: #3a4047;
    color: #fff;
    display: flex;
    align-items: center;
    justify-content: center;
}
.footer {
    flex: none;
    height: 51px;
    padding: 0 14px 2px 14px;
    background-color: #343a41;
    border-top: 1px solid #4b5259;
    display: flex;
    align-items: center;
    justify-content: space-between;
    font-size: 14.500px;
    color: #8f959c;
}
.footer-link {
    color: #0d7ff2;
    letter-spacing: -0.6px;
}

/* Taskbar */
.taskbar {
    flex: none;
    height: 71px;
    padding-bottom: 5px;
    display: flex;
    align-items: center;
    background: linear-gradient(90deg, #f8e0d2 0%, #eedcd0 30%, #ecd8d2 62%, #d6e2e4 80%, #d2e4e0 100%);
    border-top: 2px solid #c8bcb2;
    font-family: "Noto Sans", sans-serif;
    color: #1c1c1e;
}
.weather {
    width: 340px;
    padding-left: 30px;
    display: flex;
    align-items: flex-start;
}
.temp {
    width: 34px;
    height: 24px;
    margin: -8px 0 0 -27px;
    border-radius: 12px;
    background-color: rgba(255, 255, 255, 0.75);
    font-size: 15px;
    line-height: 24px;
    text-align: center;
}
.apps {
    display: flex;
    align-items: center;
}
.app-slot {
    width: 66px;
    height: 64px;
    display: flex;
    align-items: center;
    justify-content: center;
    position: relative;
}
.app-slot:first-child {
    justify-content: flex-start;
    padding-left: 14px;
}
.app-run::after, .app-active::after {
    content: "";
    position: absolute;
    bottom: 2px;
    left: 30px;
    width: 6px;
    height: 6px;
    border-radius: 50%;
    background-color: #777;
}
.app-active {
    width: 56px;
    height: 58px;
    margin: 0 5px;
    background-color: #f6efe6;
    border-radius: 6px;
}
.app-active::after {
    left: 16px;
    width: 24px;
    height: 5px;
    border-radius: 3px;
    background-color: #0b78d4;
}
.todo-count {
    position: absolute;
    top: 4px;
    left: 37px;
    width: 24px;
    height: 24px;
    border-radius: 50%;
    background-color: #0b78d4;
    color: #fff;
    font-size: 16px;
    text-align: center;
    line-height: 24px;
}
.chrome-badge {
    position: absolute;
    top: 5px;
    left: 31px;
    width: 22px;
    height: 28px;
    border-radius: 50%;
    background: linear-gradient(#1f8a84, #b4a2a4 50%, #e3383c);
    opacity: 0.85;
}
.word-w {
    font: bold 14px "Liberation Sans", sans-serif;
    fill: #fff;
}
.pdf-t {
    font: 10px "Liberation Sans", sans-serif;
    fill: #f4d6d6;
}
.tray {
    flex: 1;
    display: flex;
    align-items: center;
    padding-left: 102px;
}
.tray-cloud {
    margin-left: 27px;
}
.tray-lang {
    margin-left: 27px;
    font-size: 17px;
}
.tray-wifi {
    margin-left: 27px;
}
.tray-sound {
    margin-left: 11px;
}
.tray-batt {
    margin-left: 11px;
}
.clock {
    width: 108px;
    display: flex;
    flex-direction: column;
    align-items: flex-end;
    font-size: 17.500px;
    line-height: 25px;
}
.tray-bell {
    margin-left: 12px;
}
.zz {
    font: bold 9px "Liberation Sans", sans-serif;
    fill: #fff;
}
.tray-copilot {
    margin-left: 26px;
}
.pre {
    font: bold 9px "Liberation Sans", sans-serif;
    fill: #222;
}
```
